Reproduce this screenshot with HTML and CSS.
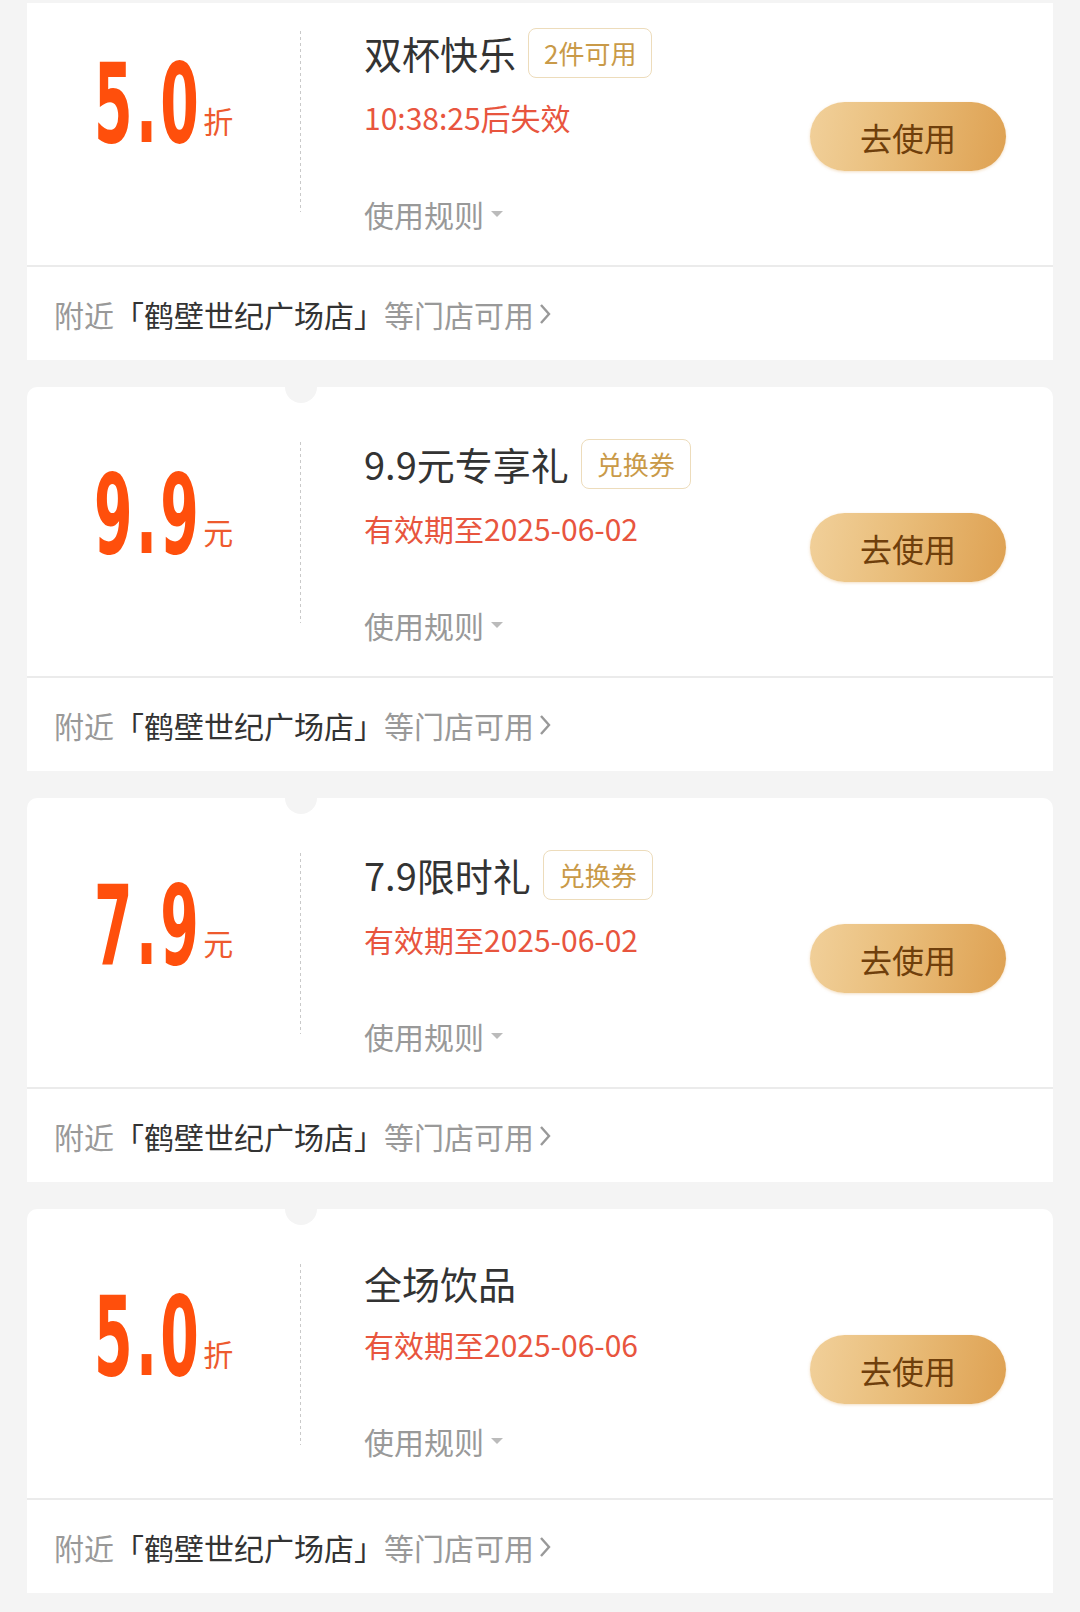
FILE: index.html
```html
<!DOCTYPE html>
<html lang="zh-CN">
<head>
  <meta charset="UTF-8" />
  <meta name="viewport" content="width=device-width, initial-scale=1.0"/>
  <title>我的优惠券</title>
  <link rel="stylesheet" href="styles.css">
</head>
<body>

  <main class="list">

    <div class="coupon">
      <div class="coupon-main">
        <div class="coupon-value"><span class="num">5.0</span><span class="unit">折</span></div>
        <div class="coupon-sep"></div>
        <div class="coupon-info">
          <div class="title-row"><span class="title">双杯快乐</span><span class="tag">2件可用</span></div>
          <div class="expire">10:38:25后失效</div>
          <div class="rules">使用规则<i class="caret"></i></div>
        </div>
        <button class="use-btn">去使用</button>
      </div>
      <div class="coupon-shops">
        附近<span class="shop">「鹤壁世纪广场店」</span>等门店可用
        <svg class="arrow" width="14" height="24" viewBox="0 0 14 24"><polyline points="3,3 11,12 3,21" fill="none" stroke="#999" stroke-width="2.4"/></svg>
      </div>
    </div>

    <div class="coupon">
      <div class="coupon-main">
        <div class="coupon-value"><span class="num">9.9</span><span class="unit">元</span></div>
        <div class="coupon-sep"></div>
        <div class="coupon-info">
          <div class="title-row"><span class="title">9.9元专享礼</span><span class="tag">兑换券</span></div>
          <div class="expire">有效期至2025-06-02</div>
          <div class="rules">使用规则<i class="caret"></i></div>
        </div>
        <button class="use-btn">去使用</button>
      </div>
      <div class="coupon-shops">
        附近<span class="shop">「鹤壁世纪广场店」</span>等门店可用
        <svg class="arrow" width="14" height="24" viewBox="0 0 14 24"><polyline points="3,3 11,12 3,21" fill="none" stroke="#999" stroke-width="2.4"/></svg>
      </div>
    </div>

    <div class="coupon">
      <div class="coupon-main">
        <div class="coupon-value"><span class="num">7.9</span><span class="unit">元</span></div>
        <div class="coupon-sep"></div>
        <div class="coupon-info">
          <div class="title-row"><span class="title">7.9限时礼</span><span class="tag">兑换券</span></div>
          <div class="expire">有效期至2025-06-02</div>
          <div class="rules">使用规则<i class="caret"></i></div>
        </div>
        <button class="use-btn">去使用</button>
      </div>
      <div class="coupon-shops">
        附近<span class="shop">「鹤壁世纪广场店」</span>等门店可用
        <svg class="arrow" width="14" height="24" viewBox="0 0 14 24"><polyline points="3,3 11,12 3,21" fill="none" stroke="#999" stroke-width="2.4"/></svg>
      </div>
    </div>

    <div class="coupon">
      <div class="coupon-main">
        <div class="coupon-value"><span class="num">5.0</span><span class="unit">折</span></div>
        <div class="coupon-sep"></div>
        <div class="coupon-info">
          <div class="title-row"><span class="title">全场饮品</span></div>
          <div class="expire">有效期至2025-06-06</div>
          <div class="rules">使用规则<i class="caret"></i></div>
        </div>
        <button class="use-btn">去使用</button>
      </div>
      <div class="coupon-shops">
        附近<span class="shop">「鹤壁世纪广场店」</span>等门店可用
        <svg class="arrow" width="14" height="24" viewBox="0 0 14 24"><polyline points="3,3 11,12 3,21" fill="none" stroke="#999" stroke-width="2.4"/></svg>
      </div>
    </div>

  </main>

</body>
</html>
```

FILE: styles.css
```css
* { box-sizing: border-box; }

body {
  margin: 0;
  background: #f4f4f4;
  font-family: "Noto Sans CJK SC", "Noto Sans", sans-serif;
  color: #333;
}

.list {
  padding: 3px 27px 0;
  display: flex;
  flex-direction: column;
  gap: 27px;
}

.coupon {
  position: relative;
  background: white;
  border-radius: 10px 10px 0 0;
  overflow: hidden;
}

/* half circle cut at the top, above the dashed line */
.coupon::before {
  content: "";
  position: absolute;
  left: 258px;
  top: -16px;
  width: 32px;
  height: 32px;
  border-radius: 50%;
  background: #f4f4f4;
}

/* first card is scrolled partly out of view */
.coupon:first-child { border-radius: 0; }
.coupon:first-child::before { display: none; }
.coupon:first-child .coupon-main { margin-top: -27px; }

.coupon-main {
  display: flex;
  height: 289px;
}

.coupon-value {
  width: 273px;
  flex-shrink: 0;
  display: flex;
  justify-content: center;
  align-items: flex-end;
  height: 183px;
  color: #ff4f0c;
}

.num {
  display: inline-block;
  font-family: "DejaVu Sans Condensed", "DejaVu Sans", sans-serif;
  font-stretch: condensed;
  font-weight: bold;
  font-size: 110px;
  line-height: 110px;
  letter-spacing: 6px;
  transform: scaleX(0.56);
  transform-origin: 0 0;
  margin-right: -85px;
}

.unit {
  font-size: 30px;
  line-height: 30px;
  margin: 0 0 24px 1px;
  color: #ee5a2e;
}

.coupon-sep {
  width: 1px;
  height: 181px;
  margin-top: 55px;
  flex-shrink: 0;
  background: repeating-linear-gradient(to bottom, #c9c9c9 0 3px, transparent 3px 6px);
}

.coupon-info {
  flex: 1;
  padding: 52px 0 0 63px;
}

.title-row {
  display: flex;
  align-items: center;
  min-height: 44px;
}

.title {
  font-size: 38px;
  line-height: 44px;
  color: #333;
}

.tag {
  margin-left: 12px;
  height: 50px;
  padding: 0 15px;
  border: 1px solid #eddcbb;
  border-radius: 8px;
  font-size: 26px;
  line-height: 48px;
  color: #c99a48;
}

.expire {
  margin-top: 19px;
  font-size: 30px;
  line-height: 40px;
  color: #e8553e;
}

.rules {
  margin-top: 57px;
  font-size: 30px;
  line-height: 40px;
  color: #999;
  display: flex;
  align-items: center;
}

.caret {
  margin-left: 7px;
  width: 0;
  height: 0;
  border-left: 6px solid transparent;
  border-right: 6px solid transparent;
  border-top: 6px solid #bbb;
}

.use-btn {
  flex-shrink: 0;
  align-self: flex-start;
  margin: 126px 47px 0 0;
  width: 196px;
  height: 69px;
  border: none;
  border-radius: 35px;
  background: linear-gradient(100deg, #f1d09a 0%, #e9bd7a 45%, #dea152 100%);
  box-shadow: 0 1px 3px rgba(222, 161, 82, 0.35);
  font-family: inherit;
  font-size: 32px;
  color: #6f3f0c;
  cursor: pointer;
}

.coupon-shops {
  height: 95px;
  border-top: 2px solid #ebebeb;
  padding-left: 27px;
  display: flex;
  align-items: center;
  font-size: 30px;
  color: #999;
}

.shop {
  color: #333;
}

.arrow {
  margin-left: 4px;
}
```
